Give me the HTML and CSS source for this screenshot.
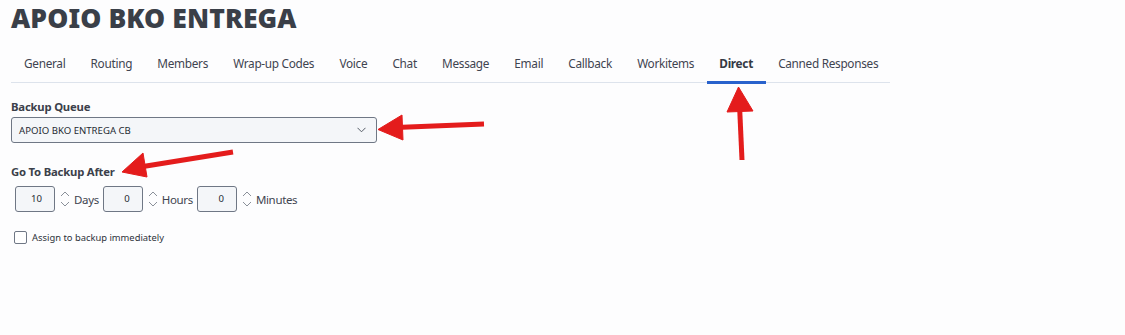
FILE: index.html
```html
<!DOCTYPE html>
<html>
<head>
<title>APOIO BKO ENTREGA - Direct</title>
<meta charset="utf-8" />
<link rel="stylesheet" href="styles.css">
</head>
<body>
<div class="page">
<h1 class="queueTitle">APOIO BKO ENTREGA</h1>
<ul class="tabs">
	<li>General</li>
	<li>Routing</li>
	<li>Members</li>
	<li>Wrap-up Codes</li>
	<li>Voice</li>
	<li>Chat</li>
	<li>Message</li>
	<li>Email</li>
	<li>Callback</li>
	<li>Workitems</li>
	<li class="active">Direct</li>
	<li>Canned Responses</li>
</ul>
<section class="directForm">
	<label class="fieldLabel">Backup Queue</label>
	<div class="selectBox">
		<span>APOIO BKO ENTREGA CB</span>
		<svg class="chevron" width="9" height="6" viewBox="0 0 9 6"><path d="M0.5 0.8 L4.5 4.8 L8.5 0.8" fill="none" stroke="#555c66" stroke-width="1"/></svg>
	</div>
	<label class="fieldLabel afterLabel">Go To Backup After</label>
	<div class="timeRow">
		<div class="numBox">10</div>
		<svg class="spinner" width="10" height="20" viewBox="0 0 10 20"><path d="M1 7 L5 3 L9 7 M1 13 L5 17 L9 13" fill="none" stroke="#8a9099" stroke-width="1"/></svg>
		<span class="unit">Days</span>
		<div class="numBox">0</div>
		<svg class="spinner" width="10" height="20" viewBox="0 0 10 20"><path d="M1 7 L5 3 L9 7 M1 13 L5 17 L9 13" fill="none" stroke="#8a9099" stroke-width="1"/></svg>
		<span class="unit">Hours</span>
		<div class="numBox">0</div>
		<svg class="spinner" width="10" height="20" viewBox="0 0 10 20"><path d="M1 7 L5 3 L9 7 M1 13 L5 17 L9 13" fill="none" stroke="#8a9099" stroke-width="1"/></svg>
		<span class="unit">Minutes</span>
	</div>
	<div class="checkRow">
		<span class="checkBox"></span>
		<span>Assign to backup immediately</span>
	</div>
</section>
</div>
<!-- red annotation arrows drawn over the page -->
<svg class="annotations" width="1125" height="335" viewBox="0 0 1125 335">
	<g fill="#e41c1c" stroke="#e41c1c" stroke-linejoin="round">
		<line x1="484" y1="124" x2="396" y2="127.5" stroke-width="5"/>
		<polygon points="378,129.5 402,115 403,140" stroke-width="1"/>
		<line x1="233" y1="152" x2="140" y2="167" stroke-width="5"/>
		<polygon points="122,172 143,153 147,177" stroke-width="1"/>
		<line x1="742" y1="160" x2="739.5" y2="105" stroke-width="5"/>
		<polygon points="738.5,87 727,112 753,111" stroke-width="1"/>
	</g>
</svg>
</body>
</html>
```
FILE: styles.css
```css
*{
	padding:0;
	margin:0;
	box-sizing:border-box;
}
body{
	background:#fdfdfe;
	font-family:"Noto Sans","Open Sans",sans-serif;
	color:#3b404a;
	width:1125px;
	height:335px;
	overflow:hidden;
	position:relative;
}
.page{
	padding:2px 0 0 11px;
}
.queueTitle{
	font-size:26.5px;
	font-weight:900;
	line-height:32px;
	color:#3a3f48;
	letter-spacing:0.1px;
}
.tabs{
	list-style:none;
	display:flex;
	width:879px;
	margin-top:16px;
	border-bottom:1px solid #dde3ec;
}
.tabs li{
	font-size:11.8px;
	letter-spacing:-0.3px;
	line-height:16px;
	padding:5px 12.6px 10px;
	color:#3f4450;
	white-space:nowrap;
	border-bottom:3px solid transparent;
	margin-bottom:-2px;
}
.tabs li:first-child{
	padding-left:13px;
}
.tabs li.active{
	font-weight:bold;
	color:#343944;
	border-bottom-color:#2962cc;
}
.directForm{
	padding-top:16px;
}
.fieldLabel{
	display:block;
	font-size:11.3px;
	letter-spacing:-0.2px;
	font-weight:bold;
	line-height:16px;
	color:#3b404a;
}
.selectBox{
	display:flex;
	align-items:center;
	justify-content:space-between;
	width:366px;
	height:26px;
	margin-top:2px;
	padding:0 10px 0 7px;
	border:1px solid #6f7785;
	border-radius:3px;
	background:#f4f6f9;
	font-size:9.6px;
	color:#262b33;
}
.afterLabel{
	margin-top:21px;
}
.timeRow{
	display:flex;
	align-items:center;
	margin-top:6px;
	padding-left:4px;
	font-size:11.5px;
	letter-spacing:-0.35px;
}
.numBox{
	width:40px;
	height:26px;
	line-height:24px;
	padding-right:12px;
	text-align:right;
	border:1px solid #6f7785;
	border-radius:3px;
	background:#f4f6f9;
	font-size:9.6px;
	letter-spacing:0;
	color:#262b33;
}
.spinner{
	margin:0 4px 0 5px;
}
.unit{
	margin-right:4px;
	color:#3f4450;
}
.checkRow{
	display:flex;
	align-items:center;
	gap:5px;
	margin-top:19px;
	padding-left:3px;
	font-size:9.4px;
	color:#2d323a;
}
.checkBox{
	width:13px;
	height:13px;
	border:1px solid #6f7785;
	border-radius:2px;
	background:#fff;
}
.annotations{
	position:absolute;
	left:0;
	top:0;
	pointer-events:none;
}
```
